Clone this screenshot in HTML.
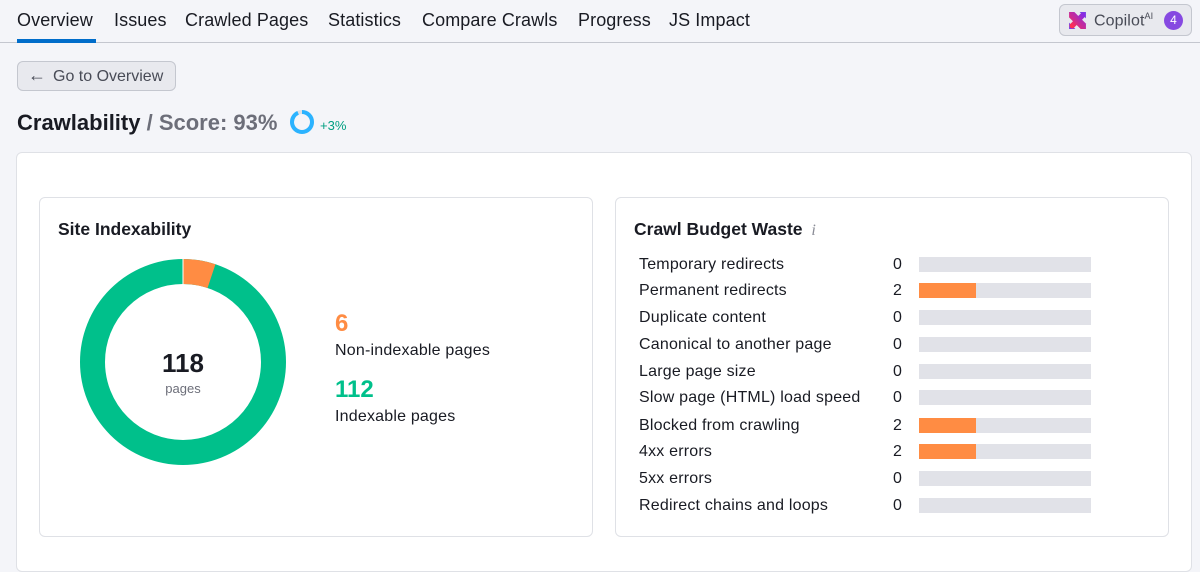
<!DOCTYPE html>
<html><head><style>
*{margin:0;padding:0;box-sizing:border-box}
body{width:1200px;height:550px;background:#f4f5f9;font-family:"Liberation Sans",sans-serif;color:#191b23;position:relative;overflow:hidden}
.nav{position:absolute;top:0;left:0;width:1200px;height:43px;border-bottom:1px solid #c4c7cf}
.nav span{position:absolute;top:10px;font-size:18px;letter-spacing:0.1px}
.ul{position:absolute;left:17px;top:39px;width:79px;height:4px;background:#006dca}
.cop{position:absolute;left:1059px;top:4px;width:133px;height:32px;border:1px solid #c4c7cf;border-radius:6px;background:#e8e9ee}
.btn{position:absolute;left:17px;top:61px;width:159px;height:30px;border:1px solid #c4c7cf;border-radius:6px;background:#e8e9ee;font-size:16px;color:#484b56}
.card{position:absolute;background:#fff;border:1px solid #dfe1e6;border-radius:6px}
.row{position:absolute;left:639px;font-size:16px;letter-spacing:0.2px}
.num{position:absolute;left:893px;font-size:16px}
.bar{position:absolute;left:919px;width:172px;height:15px;background:#e1e2e8}
.bar i{display:block;height:15px;width:57px;background:#ff8c43}
</style></head><body>
<div class="nav">
<span style="left:17px">Overview</span><span style="left:114px">Issues</span><span style="left:185px">Crawled Pages</span><span style="left:328px">Statistics</span><span style="left:422px">Compare Crawls</span><span style="left:578px">Progress</span><span style="left:669px">JS Impact</span>
<div class="ul"></div>
<div class="cop">
<svg style="position:absolute;left:8px;top:6px" width="19" height="19" viewBox="0 0 18 18"><defs><linearGradient id="g" x1="0" y1="1" x2="1" y2="0"><stop offset="0" stop-color="#ff2d55"/><stop offset="1" stop-color="#8a2be2"/></linearGradient></defs><path d="M1 1h5l11 11v5h-5L1 6z" fill="url(#g)"/><path d="M11 1h6v6z M1 11v6h6z" fill="#7b3fe4"/><path d="M4 14L14 4" stroke="url(#g)" stroke-width="5" stroke-linecap="round"/></svg>
<span style="position:absolute;left:34px;top:6px;font-size:16px;color:#484b56">Copilot<sup style="font-size:9px">AI</sup></span>
<span style="position:absolute;left:104px;top:6px;width:19px;height:19px;border-radius:50%;background:#8649e1;color:#fff;font-size:12px;text-align:center;line-height:19px">4</span>
</div></div>
<div class="btn"><span style="position:absolute;left:10px;top:3px;font-size:18px">←</span><span style="position:absolute;left:35px;top:6px">Go to Overview</span></div>
<div style="position:absolute;left:17px;top:110px;font-size:22px;font-weight:bold">Crawlability <span style="color:#6c6e79">/ Score: 93%</span></div>
<svg style="position:absolute;left:289px;top:109px" width="26" height="26"><circle cx="13" cy="13" r="10" fill="none" stroke="#e0e1e6" stroke-width="4"/><circle cx="13" cy="13" r="10" fill="none" stroke="#2bb3ff" stroke-width="4" stroke-dasharray="58.4 62.8" transform="rotate(-90 13 13)"/></svg>
<div style="position:absolute;left:320px;top:118px;font-size:13px;color:#009f81">+3%</div>
<div class="card" style="left:16px;top:152px;width:1176px;height:420px"></div>
<div class="card" style="left:39px;top:197px;width:554px;height:340px"></div>
<div class="card" style="left:615px;top:197px;width:554px;height:340px"></div>
<div style="position:absolute;left:58px;top:219px;font-size:17.5px;font-weight:bold">Site Indexability</div>
<svg style="position:absolute;left:78px;top:257px" width="210" height="210"><circle cx="105" cy="105" r="90.5" fill="none" stroke="#00c08b" stroke-width="25"/><circle cx="105" cy="105" r="90.5" fill="none" stroke="#ff8c43" stroke-width="25" stroke-dasharray="29 600" transform="rotate(-90 105 105)"/><line x1="105" y1="105" x2="105" y2="0" stroke="#fff" stroke-width="1"/></svg>
<div style="position:absolute;left:133px;top:348px;width:100px;text-align:center;font-size:26px;font-weight:bold">118</div>
<div style="position:absolute;left:133px;top:381px;width:100px;text-align:center;font-size:13px;color:#6c6e79">pages</div>
<div style="position:absolute;left:335px;top:310px;font-size:24px;font-weight:bold;color:#ff8c43">6</div>
<div style="position:absolute;left:335px;top:342px;font-size:16px;letter-spacing:0.2px">Non-indexable pages</div>
<div style="position:absolute;left:335px;top:376px;font-size:24px;font-weight:bold;color:#00c08b">112</div>
<div style="position:absolute;left:335px;top:408px;font-size:16px;letter-spacing:0.2px">Indexable pages</div>
<div style="position:absolute;left:634px;top:219px;font-size:17.5px;font-weight:bold">Crawl Budget Waste <span style="font-family:'Liberation Serif',serif;font-weight:normal;color:#8a8c96;font-style:italic;font-size:16px;margin-left:4px">i</span></div>
<div class="row" style="top:256px">Temporary redirects</div><div class="num" style="top:256px">0</div><div class="bar" style="top:257px"></div>
<div class="row" style="top:282px">Permanent redirects</div><div class="num" style="top:282px">2</div><div class="bar" style="top:283px"><i></i></div>
<div class="row" style="top:309px">Duplicate content</div><div class="num" style="top:309px">0</div><div class="bar" style="top:310px"></div>
<div class="row" style="top:336px">Canonical to another page</div><div class="num" style="top:336px">0</div><div class="bar" style="top:337px"></div>
<div class="row" style="top:363px">Large page size</div><div class="num" style="top:363px">0</div><div class="bar" style="top:364px"></div>
<div class="row" style="top:389px">Slow page (HTML) load speed</div><div class="num" style="top:389px">0</div><div class="bar" style="top:390px"></div>
<div class="row" style="top:417px">Blocked from crawling</div><div class="num" style="top:417px">2</div><div class="bar" style="top:418px"><i></i></div>
<div class="row" style="top:443px">4xx errors</div><div class="num" style="top:443px">2</div><div class="bar" style="top:444px"><i></i></div>
<div class="row" style="top:470px">5xx errors</div><div class="num" style="top:470px">0</div><div class="bar" style="top:471px"></div>
<div class="row" style="top:497px">Redirect chains and loops</div><div class="num" style="top:497px">0</div><div class="bar" style="top:498px"></div>
</body></html>
